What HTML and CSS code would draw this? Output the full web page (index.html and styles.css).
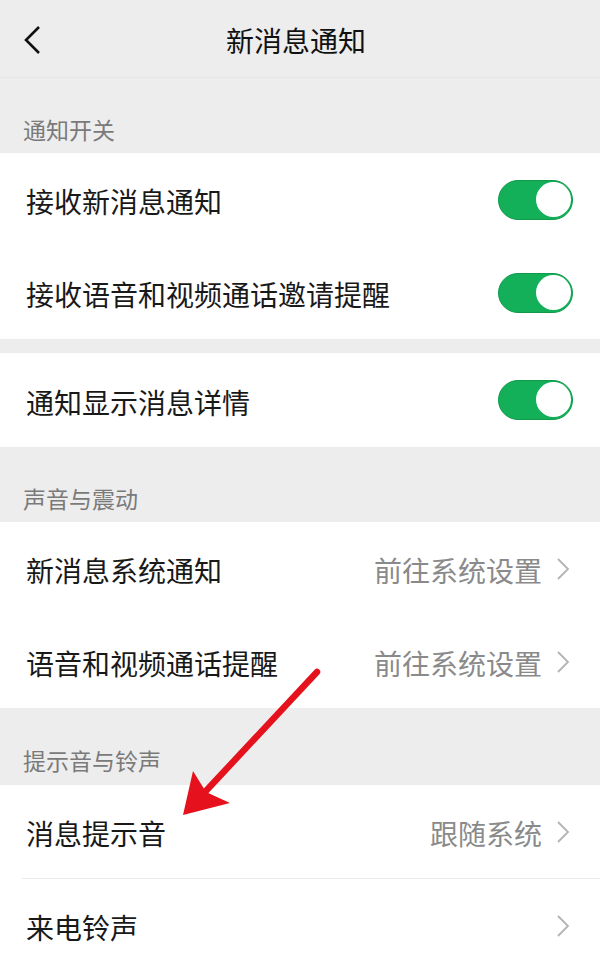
FILE: index.html
```html
<!DOCTYPE html>
<html lang="zh-CN">
<head>
<meta charset="utf-8">
<title>新消息通知</title>
<link rel="stylesheet" href="styles.css">
</head>
<body>
<div class="page">
  <header class="topbar">
    <svg class="back" width="20" height="30" viewBox="0 0 20 30"><polyline points="16,2 3,15 16,28" fill="none" stroke="#111" stroke-width="2.6" stroke-linejoin="miter"/></svg>
    <h1 class="title">新消息通知</h1>
  </header>

  <div class="section-label">通知开关</div>
  <div class="group">
    <div class="row"><span class="row-text">接收新消息通知</span><span class="switch"><span class="knob"></span></span></div>
    <div class="row"><span class="row-text">接收语音和视频通话邀请提醒</span><span class="switch"><span class="knob"></span></span></div>
  </div>
  <div class="gap"></div>
  <div class="group">
    <div class="row row-tall"><span class="row-text">通知显示消息详情</span><span class="switch"><span class="knob"></span></span></div>
  </div>

  <div class="section-label">声音与震动</div>
  <div class="group">
    <div class="row row-link"><span class="row-text">新消息系统通知</span><span class="row-value">前往系统设置</span><svg class="chev" width="14" height="22" viewBox="0 0 14 22"><polyline points="2,1 12,11 2,21" fill="none" stroke="#b3b3b3" stroke-width="1.8"/></svg></div>
    <div class="row row-link"><span class="row-text">语音和视频通话提醒</span><span class="row-value">前往系统设置</span><svg class="chev" width="14" height="22" viewBox="0 0 14 22"><polyline points="2,1 12,11 2,21" fill="none" stroke="#b3b3b3" stroke-width="1.8"/></svg></div>
  </div>

  <div class="section-label section-label-last">提示音与铃声</div>
  <div class="group">
    <div class="row row-link"><span class="row-text">消息提示音</span><span class="row-value">跟随系统</span><svg class="chev" width="14" height="22" viewBox="0 0 14 22"><polyline points="2,1 12,11 2,21" fill="none" stroke="#b3b3b3" stroke-width="1.8"/></svg></div>
    <div class="divider"></div>
    <div class="row row-link"><span class="row-text">来电铃声</span><svg class="chev" width="14" height="22" viewBox="0 0 14 22"><polyline points="2,1 12,11 2,21" fill="none" stroke="#b3b3b3" stroke-width="1.8"/></svg></div>
  </div>

  <svg class="annotation" width="600" height="962" viewBox="0 0 600 962">
    <line x1="317" y1="672" x2="204" y2="793" stroke="#e5121d" stroke-width="6.5" stroke-linecap="round"/>
    <polygon points="183,815 193,771 206,792 230,803" fill="#e5121d"/>
  </svg>
</div>
</body>
</html>
```

FILE: styles.css
```css
html, body {
  margin: 0;
  padding: 0;
}
body {
  background: #ededed;
  font-family: "Noto Sans CJK SC", "Noto Sans", sans-serif;
  color: #191919;
}
.page {
  position: relative;
  width: 600px;
  height: 962px;
  overflow: hidden;
  background: #ededed;
}
.topbar {
  height: 78px;
  position: relative;
  display: flex;
  align-items: center;
  justify-content: center;
  border-bottom: 1px solid #e6e6e6;
  box-sizing: border-box;
}
.back {
  position: absolute;
  left: 23px;
  top: 25px;
}
.title {
  margin: 0;
  font-size: 28px;
  font-weight: normal;
  line-height: 28px;
  color: #111;
  margin-top: 2px;
  margin-left: -8px;
}
.section-label {
  height: 75px;
  box-sizing: border-box;
  display: flex;
  align-items: flex-end;
  padding: 0 0 12px 23px;
  font-size: 23px;
  line-height: 23px;
  color: #7a7a7a;
}
.section-label-last {
  height: 77px;
  padding-bottom: 13px;
}
.group {
  background: #fff;
}
.gap {
  height: 14px;
}
.row {
  height: 93px;
  display: flex;
  align-items: center;
  padding: 0 27px 0 26px;
}
.row-tall {
  height: 94px;
}
.row-link {
  padding-right: 30px;
}
.row-text {
  flex: 1;
  font-size: 28px;
  line-height: 28px;
  color: #191919;
  margin-top: 3px;
}
.row-value {
  font-size: 28px;
  line-height: 28px;
  color: #8a8a8a;
  margin-right: 14px;
  margin-top: 3px;
}
.chev {
  display: block;
}
.divider {
  height: 1px;
  background: #ebebeb;
  margin-left: 22px;
}
.switch {
  width: 75px;
  height: 40px;
  border-radius: 20px;
  background: #13b059;
  box-sizing: border-box;
  border: 1.5px solid #109a4c;
  position: relative;
  flex: none;
}
.knob {
  position: absolute;
  right: 1px;
  top: 1px;
  width: 35px;
  height: 35px;
  border-radius: 50%;
  background: #fff;
}
.annotation {
  position: absolute;
  left: 0;
  top: 0;
  pointer-events: none;
}
```
